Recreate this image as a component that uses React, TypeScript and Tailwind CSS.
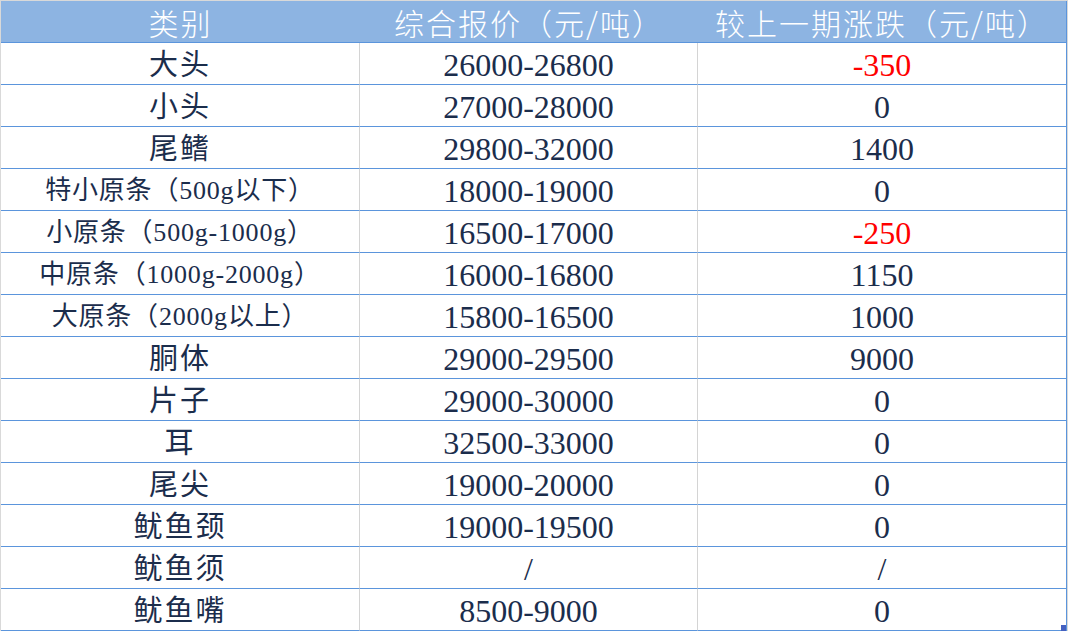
const rows: { name: string; small?: boolean; price: string; change: string; down?: boolean }[] = [
  { name: '大头', price: '26000-26800', change: '-350', down: true },
  { name: '小头', price: '27000-28000', change: '0' },
  { name: '尾鳍', price: '29800-32000', change: '1400' },
  { name: '特小原条（500g以下）', small: true, price: '18000-19000', change: '0' },
  { name: '小原条（500g-1000g）', small: true, price: '16500-17000', change: '-250', down: true },
  { name: '中原条（1000g-2000g）', small: true, price: '16000-16800', change: '1150' },
  { name: '大原条（2000g以上）', small: true, price: '15800-16500', change: '1000' },
  { name: '胴体', price: '29000-29500', change: '9000' },
  { name: '片子', price: '29000-30000', change: '0' },
  { name: '耳', price: '32500-33000', change: '0' },
  { name: '尾尖', price: '19000-20000', change: '0' },
  { name: '鱿鱼颈', price: '19000-19500', change: '0' },
  { name: '鱿鱼须', price: '/', change: '/' },
  { name: '鱿鱼嘴', price: '8500-9000', change: '0' },
];

const cell = 'h-[42px] flex items-center justify-center border-b border-[#5b95dc] pt-[3px]';

export default function App() {
  return (
    <div className="w-[1068px] h-[631px] bg-[#d9d9d9] pt-px pl-px overflow-hidden">
      <div className="relative w-[1066px] bg-white border-r border-[#5b95dc] font-['Liberation_Serif','Noto_Sans_CJK_SC',serif] text-[#1b2d4c]">
        <div className="grid grid-cols-[359px_338px_368px]">
          {['类别', '综合报价（元/吨）', '较上一期涨跌（元/吨）'].map((h) => (
            <div
              key={h}
              className="h-[42px] flex items-center justify-center bg-[#8db4e2] border-b border-[#5b95dc] text-white text-[30px] leading-none font-['Noto_Sans_CJK_SC',sans-serif] font-light tracking-[2px]"
            >
              {h}
            </div>
          ))}
          {rows.map((r) => (
            <div key={r.name} className="contents">
              <div
                className={`${cell} border-r border-r-[#d4d4d4] leading-none ${
                  r.small ? 'text-[26px] tracking-[0.8px]' : 'text-[29px] tracking-[2px]'
                }`}
              >
                {r.name}
              </div>
              <div className={`${cell} border-r border-r-[#d4d4d4] text-[32px] leading-none`}>{r.price}</div>
              <div className={`${cell} text-[32px] leading-none ${r.down ? 'text-[#ff0000]' : ''}`}>{r.change}</div>
            </div>
          ))}
        </div>
        <div className="absolute right-0 bottom-0 w-[5px] h-[6px] bg-[#4460c0]" />
      </div>
    </div>
  );
}
